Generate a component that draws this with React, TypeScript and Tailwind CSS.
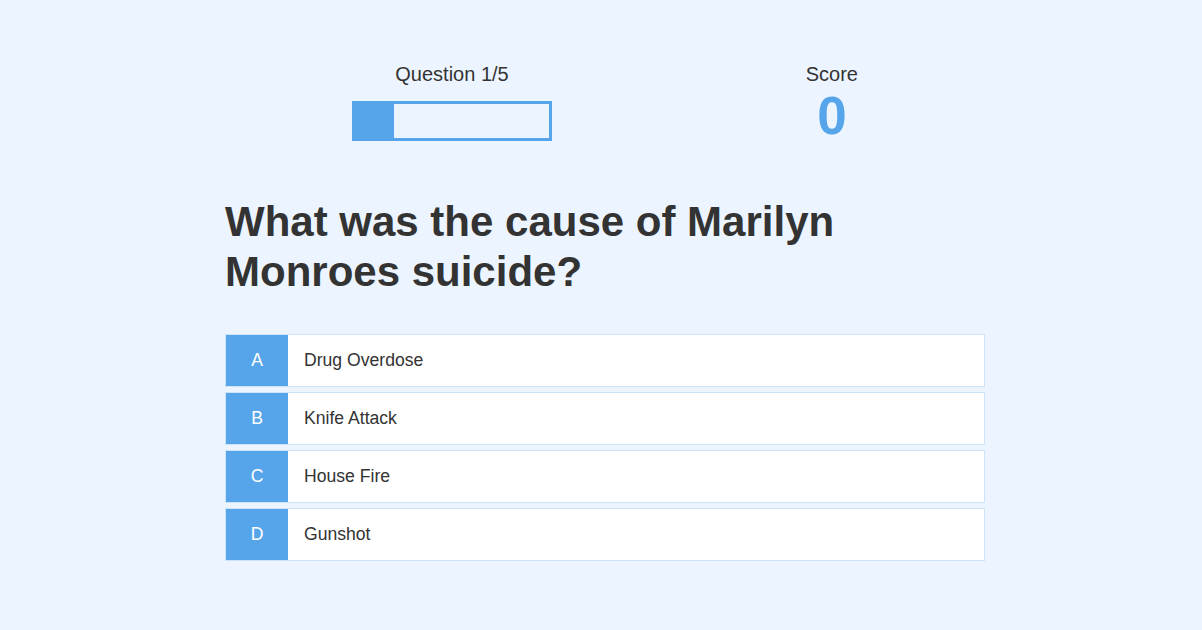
import { useState } from "react";

const choices = [
  { letter: "A", text: "Drug Overdose" },
  { letter: "B", text: "Knife Attack" },
  { letter: "C", text: "House Fire" },
  { letter: "D", text: "Gunshot" },
];

export default function App() {
  const [questionNumber] = useState(1);
  const [score] = useState(0);
  const maxQuestions = 5;

  return (
    <div className="min-h-[630px] bg-[#ecf5ff] text-[#333] font-['Liberation_Sans',Arial,sans-serif] pt-[63px]">
      <div className="w-[760px] ml-[225px]">
        {/* HUD */}
        <div className="flex justify-between px-[127px]">
          <div className="flex flex-col items-center w-[200px]">
            <p className="text-[20px] leading-[23px]">
              Question {questionNumber}/{maxQuestions}
            </p>
            <div className="mt-[15px] w-[200px] h-[40px] border-[3px] border-[#56a5eb]">
              <div
                className="h-full bg-[#56a5eb]"
                style={{ width: `${(questionNumber / maxQuestions) * 100}%` }}
              />
            </div>
          </div>
          <div className="flex flex-col items-center">
            <p className="text-[20px] leading-[23px]">Score</p>
            <p className="mt-[3px] text-[53px] leading-none font-bold text-[#56a5eb]">{score}</p>
          </div>
        </div>

        <h1 className="mt-[55px] text-[42px] leading-[50px] font-bold">
          What was the cause of Marilyn Monroes suicide?
        </h1>

        <div className="mt-[37px] flex flex-col gap-[5px]">
          {choices.map((choice) => (
            <div
              key={choice.letter}
              className="flex h-[53px] bg-white border border-[#cde3f8]"
            >
              <div className="w-[62px] bg-[#56a5eb] text-white text-[17.6px] flex items-center justify-center">
                {choice.letter}
              </div>
              <div className="flex items-center pl-[16px] text-[17.6px]">{choice.text}</div>
            </div>
          ))}
        </div>
      </div>
    </div>
  );
}
